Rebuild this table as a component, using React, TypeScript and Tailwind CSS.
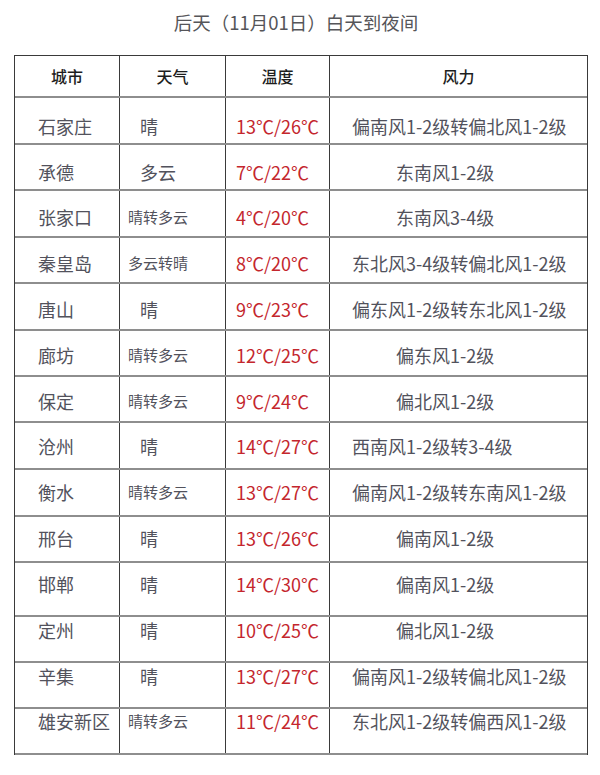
import React from "react";

type Row = {
  city: string;
  weather: string;
  small: boolean;
  temp: string;
  wind: string;
  long: boolean;
  h: string;
  pt: string;
};

const rows: Row[] = [
  { city: "石家庄", weather: "晴", small: false, temp: "13℃/26℃", wind: "偏南风1-2级转偏北风1-2级", long: true, h: "h-[47px]", pt: "pt-[19px]" },
  { city: "承德", weather: "多云", small: false, temp: "7℃/22℃", wind: "东南风1-2级", long: false, h: "h-[46px]", pt: "pt-[18px]" },
  { city: "张家口", weather: "晴转多云", small: true, temp: "4℃/20℃", wind: "东南风3-4级", long: false, h: "h-[47px]", pt: "pt-[17px]" },
  { city: "秦皇岛", weather: "多云转晴", small: true, temp: "8℃/20℃", wind: "东北风3-4级转偏北风1-2级", long: true, h: "h-[46px]", pt: "pt-[16px]" },
  { city: "唐山", weather: "晴", small: false, temp: "9℃/23℃", wind: "偏东风1-2级转东北风1-2级", long: true, h: "h-[47px]", pt: "pt-[16px]" },
  { city: "廊坊", weather: "晴转多云", small: true, temp: "12℃/25℃", wind: "偏东风1-2级", long: false, h: "h-[46px]", pt: "pt-[15px]" },
  { city: "保定", weather: "晴转多云", small: true, temp: "9℃/24℃", wind: "偏北风1-2级", long: false, h: "h-[46px]", pt: "pt-[15px]" },
  { city: "沧州", weather: "晴", small: false, temp: "14℃/27℃", wind: "西南风1-2级转3-4级", long: true, h: "h-[47px]", pt: "pt-[14px]" },
  { city: "衡水", weather: "晴转多云", small: true, temp: "13℃/27℃", wind: "偏南风1-2级转东南风1-2级", long: true, h: "h-[47px]", pt: "pt-[13px]" },
  { city: "邢台", weather: "晴", small: false, temp: "13℃/26℃", wind: "偏南风1-2级", long: false, h: "h-[46px]", pt: "pt-[12px]" },
  { city: "邯郸", weather: "晴", small: false, temp: "14℃/30℃", wind: "偏南风1-2级", long: false, h: "h-[54px]", pt: "pt-[12px]" },
  { city: "定州", weather: "晴", small: false, temp: "10℃/25℃", wind: "偏北风1-2级", long: false, h: "h-[46px]", pt: "pt-[4px]" },
  { city: "辛集", weather: "晴", small: false, temp: "13℃/27℃", wind: "偏南风1-2级转偏北风1-2级", long: true, h: "h-[46px]", pt: "pt-[4px]" },
  { city: "雄安新区", weather: "晴转多云", small: true, temp: "11℃/24℃", wind: "东北风1-2级转偏西风1-2级", long: true, h: "h-[46px]", pt: "pt-[3px]" },
];

const font = "font-['Noto_Sans_CJK_SC','Noto_Sans',sans-serif]";

export default function App() {
  return (
    <div className={`w-[600px] h-[775px] bg-white ${font}`}>
      <div className="ml-[14px] w-[574px] h-[55px] pt-[11px] pr-[10px] flex justify-center">
        <div className="text-[18.5px] leading-[22px] text-[#555559] h-[22px]">后天（11月01日）白天到夜间</div>
      </div>
      <div className="ml-[14px] w-[574px] border-t border-l border-r border-[#3a3a3a]">
        <div className="grid grid-cols-[105px_106px_104px_1fr] h-[42px] border-b-2 border-[#8e8e8e] text-[16px] font-medium text-[#1e1e1e]">
          <div className="border-r border-[#3a3a3a] flex items-center justify-center">城市</div>
          <div className="border-r border-[#3a3a3a] flex items-center justify-center">天气</div>
          <div className="border-r border-[#3a3a3a] flex items-center justify-center">温度</div>
          <div className="flex items-center justify-center">风力</div>
        </div>
        {rows.map((r, i) => (
          <div
            key={i}
            className={`grid grid-cols-[105px_106px_104px_1fr] ${r.h} border-b-2 border-[#8e8e8e] text-[#52525c] leading-[18px]`}
          >
            <div className={`border-r border-[#3a3a3a] pl-[23px] text-[18px] whitespace-nowrap ${r.pt}`}>{r.city}</div>
            <div
              className={`border-r border-[#3a3a3a] whitespace-nowrap ${r.pt} ${
                r.small ? "pl-[8px] text-[15px]" : "pl-[20px] text-[18px]"
              }`}
            >
              {r.weather}
            </div>
            <div className={`border-r border-[#3a3a3a] pl-[10px] text-[18px] text-[#c4262d] whitespace-nowrap ${r.pt}`}>{r.temp}</div>
            <div className={`text-[18px] whitespace-nowrap ${r.pt} ${r.long ? "pl-[22px]" : "pl-[66px]"}`}>{r.wind}</div>
          </div>
        ))}
      </div>
    </div>
  );
}
